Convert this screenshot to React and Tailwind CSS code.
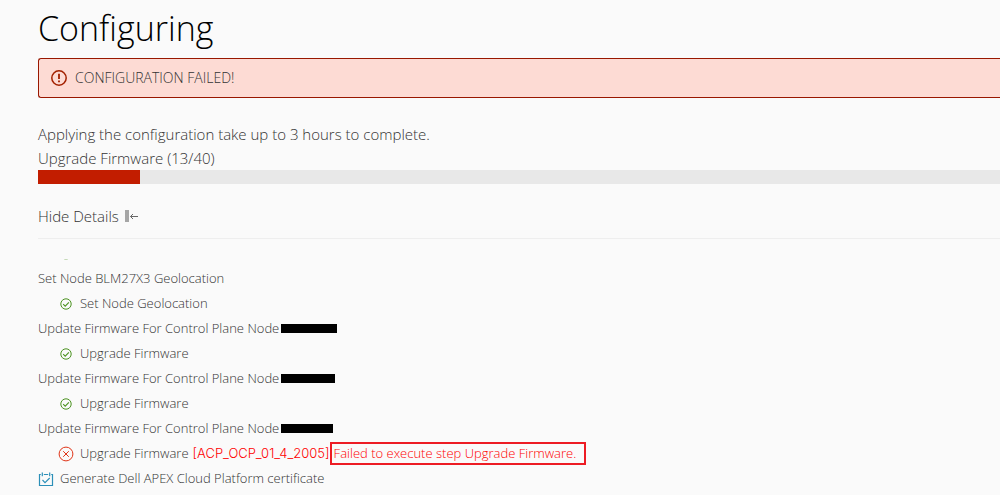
import React, { useState } from "react";

const nodes = [
  { title: "Set Node BLM27X3 Geolocation", step: "Set Node Geolocation" },
  { title: "Update Firmware For Control Plane Node", mask: "w-14", step: "Upgrade Firmware" },
  { title: "Update Firmware For Control Plane Node", mask: "w-[54px]", step: "Upgrade Firmware" },
  {
    title: "Update Firmware For Control Plane Node",
    mask: "w-[52px]",
    step: "Upgrade Firmware",
    code: "[ACP_OCP_01_4_2005]",
    error: "Failed to execute step Upgrade Firmware.",
  },
];

function AlertIcon() {
  return (
    <svg className="size-4 shrink-0" viewBox="0 0 16 16" fill="none" stroke="#a32100">
      <circle cx="8" cy="8" r="7.2" strokeWidth="1.5" />
      <path d="M8 3.8v5.2M8 10.6v1.7" strokeWidth="1.8" />
    </svg>
  );
}

function SuccessIcon() {
  return (
    <svg className="size-3 shrink-0" viewBox="0 0 12 12" fill="none" stroke="#4c9321">
      <circle cx="6" cy="6" r="5.2" />
      <path d="M3.2 6.2l2 2 3.7-3.9" strokeWidth="1.1" />
    </svg>
  );
}

function ErrorIcon() {
  return (
    <svg className="size-4 shrink-0" viewBox="0 0 16 16" fill="none" stroke="#e03518">
      <circle cx="8" cy="8" r="6.9" />
      <path d="M5.2 5.2l5.6 5.6M10.8 5.2l-5.6 5.6" />
    </svg>
  );
}

function CalendarIcon() {
  return (
    <svg className="size-4 shrink-0" viewBox="0 0 16 16" fill="none" stroke="#2b8fb8">
      <path d="M2.8 3.5H1.5v11h13v-11h-1.3M5.8 3.5h4.4" strokeWidth="1.2" />
      <path d="M4.3 1.5v3.8M11.7 1.5v3.8" strokeWidth="1.2" />
      <path d="M4.5 9l2.5 2.6 4.7-4.6" strokeWidth="1.1" />
    </svg>
  );
}

function CollapseIcon() {
  return (
    <svg className="w-3.5 h-3 shrink-0" viewBox="0 0 14 12" fill="none">
      <path d="M2 0v12" stroke="#a6a6a6" strokeWidth="4" />
      <path d="M13 6.5H5.5M8 4L5.5 6.5 8 9" stroke="#666" />
    </svg>
  );
}

export default function App() {
  const [open, setOpen] = useState(true);
  const done = 13;
  const total = 40;

  return (
    <main className="min-h-screen overflow-hidden bg-[#fafafa] pl-[38px] pt-2 font-['Open_Sans',sans-serif] font-light text-[#333333]">
      <h1 className="text-[34px] leading-10 text-black">Configuring</h1>

      <div role="alert" className="mt-[10px] flex h-10 items-center gap-2 rounded-l-[3px] border border-r-0 border-[#991700] bg-[#fddbd4] pl-3 text-sm">
        <AlertIcon />
        <span>CONFIGURATION FAILED!</span>
      </div>

      <section className="mt-6 text-[15px] leading-6">
        <p>Applying the configuration take up to 3 hours to complete.</p>
        <p>Upgrade Firmware ({done}/{total})</p>
        <div role="progressbar" aria-label="Configuration progress" aria-valuenow={done} aria-valuemax={total} className="h-[14px] bg-[#e8e8e8]">
          <div className="h-full w-[102px] bg-[#c21d00]" />
        </div>
      </section>

      <button
        type="button"
        aria-expanded={open}
        onClick={() => setOpen(!open)}
        className="mt-5 flex items-center gap-1.5 text-[15px] leading-6"
      >
        Hide Details
        <CollapseIcon />
      </button>

      {open && (
        <div className="mt-[10px] border-t border-[#eeeeee] pt-5 text-[13px]">
          {/* tail of the step scrolled out above */}
          <div className="mb-1.5 flex h-px items-end overflow-hidden pl-[22px] opacity-50">
            <SuccessIcon />
          </div>
          <ul>
            {nodes.map((node, i) => (
              <li key={i}>
                <div className="flex h-[25px] items-center gap-0.5">
                  <span>{node.title}</span>
                  {node.mask && <span className={`h-[9px] bg-black ${node.mask}`} />}
                </div>
                <div className="flex h-[25px] items-center pl-5">
                  <span className="mr-1.5 flex w-4 justify-center">
                    {node.error ? <ErrorIcon /> : <SuccessIcon />}
                  </span>
                  <span>{node.step}</span>
                  {node.error && (
                    <>
                      <span className="ml-1 font-['Inter',sans-serif] text-[#ff0000]">{node.code}</span>
                      <span className="border-2 border-[#ed1c24] pl-0.5 pr-2 text-[#ff0000]">
                        {node.error}
                      </span>
                    </>
                  )}
                </div>
              </li>
            ))}
          </ul>
          <div className="flex h-[25px] items-center gap-1.5">
            <CalendarIcon />
            <span>Generate Dell APEX Cloud Platform certificate</span>
          </div>
        </div>
      )}
    </main>
  );
}
